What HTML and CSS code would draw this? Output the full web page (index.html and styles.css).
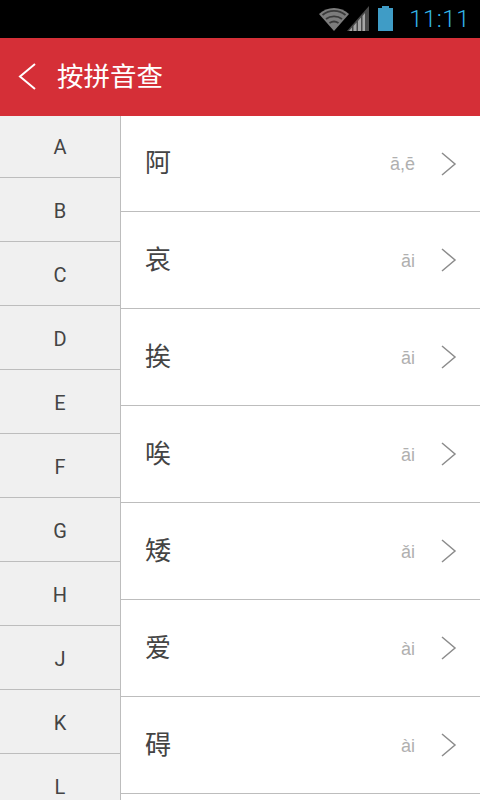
FILE: index.html
```html
<!DOCTYPE html>
<html lang="zh">
<head>
<meta charset="utf-8">
<title>按拼音查</title>
<link rel="stylesheet" href="styles.css">
</head>
<body>
<div class="status">
  <svg class="icon wifi" width="30" height="25" viewBox="0 0 30 25"><path d="M15 25 0 8C8 0 22 0 30 8Z" fill="#7c7c7c"/><path d="M3.500 9C10 3.500 20 3.500 26.500 9M7 13C11.500 9.500 18.500 9.500 23 13M10.500 17C13.500 15 16.500 15 19.500 17" fill="none" stroke="#3a3a3a" stroke-width="1.800"/></svg>
  <svg class="icon signal" width="22" height="25" viewBox="0 0 22 25"><path d="M22 0V25H0Z" fill="#4a4a4a"/><path d="M2 25 5 21.500V25ZM6.500 25V20L9.500 16.500V25ZM11 25V15L14 11.500V25ZM15.500 25V10L18 7V25Z" fill="#a6a6a6"/></svg>
  <svg class="icon battery" width="15" height="25" viewBox="0 0 15 25"><path d="M4 0H11V2H15V25H0V2H4Z" fill="#3f9cc6"/></svg>
  <span class="time">11:11</span>
</div>
<header class="bar">
  <svg class="back" width="20" height="28" viewBox="0 0 20 28"><path d="M18 1 3 13.500 18 26" fill="none" stroke="#fff" stroke-width="2"/></svg>
  <span class="title">按拼音查</span>
</header>
<main class="body">
  <nav class="letters">
    <div class="letter first">A</div>
    <div class="letter">B</div>
    <div class="letter">C</div>
    <div class="letter">D</div>
    <div class="letter">E</div>
    <div class="letter">F</div>
    <div class="letter">G</div>
    <div class="letter">H</div>
    <div class="letter">J</div>
    <div class="letter">K</div>
    <div class="letter">L</div>
  </nav>
  <section class="list">
    <div class="row first"><span class="char">阿</span><span class="pinyin">ā,ē</span><svg class="chev" width="16" height="24" viewBox="0 0 16 24"><path d="M1 1 14 12 1 23" fill="none" stroke="#8c8c8c" stroke-width="1.500"/></svg></div>
    <div class="row"><span class="char">哀</span><span class="pinyin">āi</span><svg class="chev" width="16" height="24" viewBox="0 0 16 24"><path d="M1 1 14 12 1 23" fill="none" stroke="#8c8c8c" stroke-width="1.500"/></svg></div>
    <div class="row"><span class="char">挨</span><span class="pinyin">āi</span><svg class="chev" width="16" height="24" viewBox="0 0 16 24"><path d="M1 1 14 12 1 23" fill="none" stroke="#8c8c8c" stroke-width="1.500"/></svg></div>
    <div class="row"><span class="char">唉</span><span class="pinyin">āi</span><svg class="chev" width="16" height="24" viewBox="0 0 16 24"><path d="M1 1 14 12 1 23" fill="none" stroke="#8c8c8c" stroke-width="1.500"/></svg></div>
    <div class="row"><span class="char">矮</span><span class="pinyin">ǎi</span><svg class="chev" width="16" height="24" viewBox="0 0 16 24"><path d="M1 1 14 12 1 23" fill="none" stroke="#8c8c8c" stroke-width="1.500"/></svg></div>
    <div class="row"><span class="char">爱</span><span class="pinyin">ài</span><svg class="chev" width="16" height="24" viewBox="0 0 16 24"><path d="M1 1 14 12 1 23" fill="none" stroke="#8c8c8c" stroke-width="1.500"/></svg></div>
    <div class="row"><span class="char">碍</span><span class="pinyin">ài</span><svg class="chev" width="16" height="24" viewBox="0 0 16 24"><path d="M1 1 14 12 1 23" fill="none" stroke="#8c8c8c" stroke-width="1.500"/></svg></div>
  </section>
</main>
</body>
</html>
```
FILE: styles.css
```css
* { box-sizing: border-box; }
html, body { margin: 0; height: 800px; overflow: hidden; }
body { width: 480px; background: #fff; font-family: Roboto, "Noto Sans CJK SC", sans-serif; }
.status { height: 38px; background: #000; display: flex; align-items: center; justify-content: flex-end; padding: 0 10px 0 0; }
.icon { flex: none; margin-bottom: 1px; }
.wifi { margin-right: -2px; }
.signal { margin-right: 9px; }
.battery { margin-right: 16px; }
.time { font-size: 24px; color: #33b5e5; font-weight: 300; letter-spacing: .5px; line-height: 38px; }
.bar { height: 78px; background: #d52f37; display: flex; align-items: center; padding-left: 17px; }
.back { flex: none; }
.title { color: #fff; font-size: 26.500px; margin-left: 20px; line-height: 78px; }
.body { display: flex; height: 684px; overflow: hidden; }
.letters { width: 121px; flex: none; background: #f0f0f0; border-right: 1px solid #bdbdbd; }
.letter { height: 64px; border-bottom: 1px solid #bdbdbd; display: flex; align-items: center; justify-content: center; font-size: 20px; color: #444; padding-top: 3px; }
.letter.first { height: 62px; padding-top: 1px; }
.list { flex: 1; min-width: 0; }
.row { height: 97px; border-bottom: 1px solid #bdbdbd; display: flex; align-items: center; padding: 0 23px 0 24px; }
.row.first { height: 96px; }
.char { font-size: 26px; color: #444; line-height: 30px; margin-bottom: 1px; }
.pinyin { margin-left: auto; margin-top: 2px; font-family: "Liberation Sans", sans-serif; font-size: 18px; color: #b0b0b0; margin-right: 26px; }
.chev { flex: none; margin-bottom: 0; }
```
